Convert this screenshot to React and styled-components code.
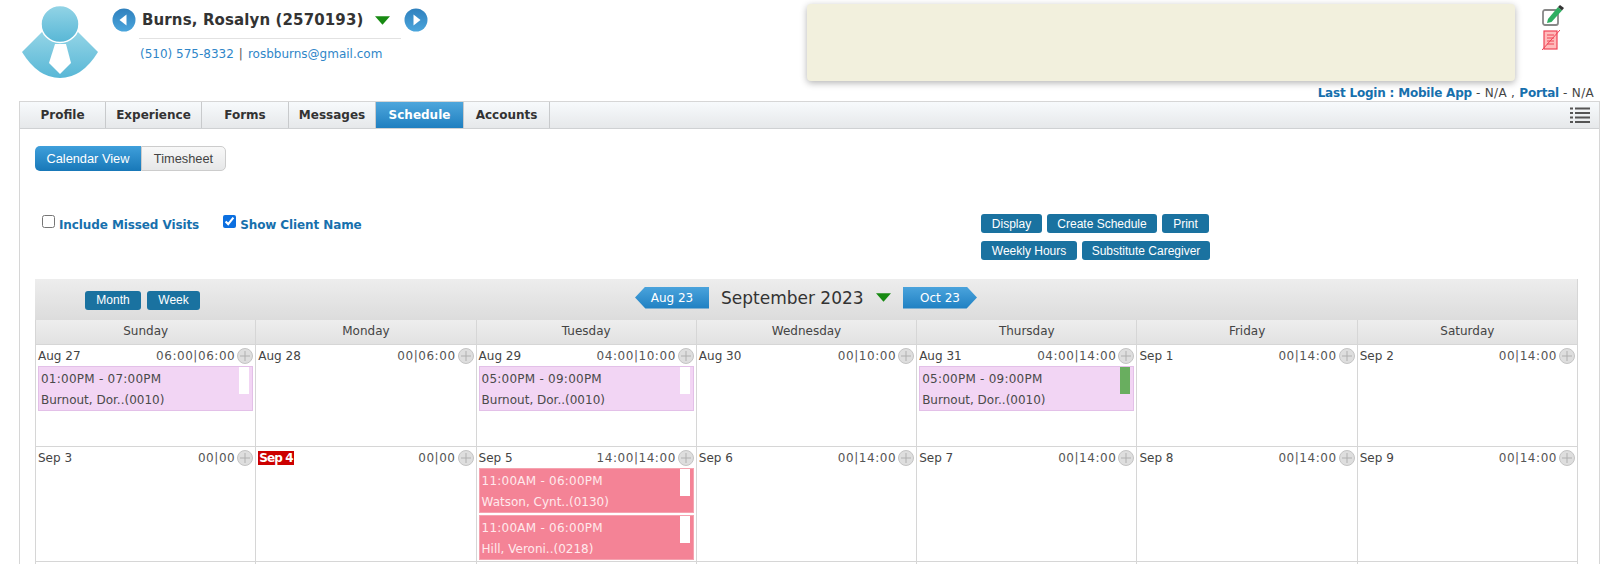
import React from 'react';
import styled, { createGlobalStyle } from 'styled-components';

const GlobalStyle = createGlobalStyle`
  html, body {
    margin: 0;
    padding: 0;
    height: 564px;
    overflow: hidden;
    background: #fff;
    font-family: "DejaVu Sans", Verdana, sans-serif;
    font-size: 12px;
    color: #444;
  }
`;

const Page = styled.div`
  width: 1600px;
  height: 564px;
  overflow: hidden;
`;

const Top = styled.header`
  display: flex;
  height: 85px;
  padding-left: 22px;
`;

const Identity = styled.div`
  width: 318px;
  margin-left: 12px;
  padding-top: 8px;
`;

const NameRow = styled.div`
  display: flex;
  align-items: center;
  height: 24px;
`;

const Name = styled.div`
  display: flex;
  align-items: center;
  width: 260px;
  margin: 0 2px 0 6px;
  font-size: 15px;
  letter-spacing: 0.12px;
  font-weight: bold;
  color: #333;
  white-space: nowrap;
`;

const NameRule = styled.div`
  width: 262px;
  height: 1px;
  margin: 6px 0 0 27px;
  background: #e2e2e2;
`;

const Contact = styled.div`
  margin: 8px 0 0 28px;
  color: #2f86c8;
`;

const Separator = styled.span`
  margin: 0 5px;
  color: #555;
`;

const NoteBox = styled.div`
  width: 708px;
  height: 77px;
  margin: 4px 0 0 auto;
  background: #f2f0dd;
  border-radius: 4px;
  box-shadow: 0 2px 7px rgba(0, 0, 0, 0.3);
`;

const ActionIcons = styled.div`
  display: flex;
  flex-direction: column;
  gap: 4px;
  width: 38px;
  margin: 4px 20px 0 27px;
`;

const LastLogin = styled.div`
  height: 16px;
  padding-right: 6px;
  line-height: 16px;
  text-align: right;
  white-space: nowrap;
  letter-spacing: 0.3px;
  color: #444;
`;

const LoginLabel = styled.b`
  letter-spacing: -0.2px;
  color: #1770ad;
`;

const Panel = styled.main`
  margin-left: 19px;
  border: 1px solid #d6d6d6;
  border-bottom: 0;
  height: 464px;
`;

const TabBar = styled.nav`
  display: flex;
  height: 26px;
  background: linear-gradient(#f7fafc, #e6e8ea);
  border-bottom: 1px solid #cfd1d3;
  position: relative;
`;

const Tab = styled.div`
  display: flex;
  align-items: center;
  justify-content: center;
  box-sizing: border-box;
  width: ${(p) => p.$w}px;
  border-right: 1px solid #c8cacc;
  font-weight: bold;
  color: ${(p) => (p.$active ? '#fff' : '#333')};
  background: ${(p) => (p.$active ? 'linear-gradient(#4ea6dc, #1f7fc0)' : 'none')};
`;

const MenuButton = styled.div`
  position: absolute;
  right: 9px;
  top: 5px;
  line-height: 0;
`;

const Content = styled.div`
  padding: 17px 17px 0 15px;
`;

const ViewSwitch = styled.div`
  display: flex;
  width: 191px;
  height: 25px;
`;

const ViewTab = styled.div`
  display: flex;
  align-items: center;
  justify-content: center;
  flex: ${(p) => p.$w} 0 0;
  box-sizing: border-box;
  font-family: "Liberation Sans", Arial, sans-serif;
  font-size: 12.8px;
  color: ${(p) => (p.$active ? '#fff' : '#444')};
  background: ${(p) => (p.$active ? 'linear-gradient(#3f9fdb, #1878b8)' : 'linear-gradient(#f8f8f8, #e6e7e8)')};
  border: ${(p) => (p.$active ? '0' : '1px solid #ccc')};
  border-radius: ${(p) => (p.$active ? '5px 0 0 5px' : '0 5px 5px 0')};
`;

const Options = styled.section`
  display: flex;
  justify-content: space-between;
  height: 65px;
  margin-top: 43px;
  padding-right: 371px;
`;

const Checks = styled.div`
  display: flex;
  gap: 24px;
  padding: 1px 0 0 7px;
`;

const CheckLabel = styled.label`
  display: flex;
  height: 20px;
  font-weight: bold;
  letter-spacing: -0.1px;
  color: #1770ad;
  line-height: 20px;
`;

const CheckBox = styled.input`
  width: 13px;
  height: 13px;
  margin: 0 4px 0 0;
  accent-color: #0b6fe0;
`;

const Actions = styled.div`
  display: flex;
  flex-direction: column;
  gap: 8px;
  width: 230px;
`;

const ActionRow = styled.div`
  display: flex;
  gap: 5px;
`;

const Button = styled.div`
  display: flex;
  align-items: center;
  justify-content: center;
  width: ${(p) => p.$w}px;
  height: 19px;
  border-radius: 3px;
  background: #1a72a0;
  color: #fff;
  font-family: "Liberation Sans", Arial, sans-serif;
  font-size: 12px;
`;

const Calendar = styled.section`
  width: 1542px;
  border-right: 1px solid #d6d6d6;
`;

const CalToolbar = styled.div`
  display: flex;
  align-items: center;
  height: 41px;
  background: linear-gradient(#ededed, #dcdcdc);
`;

const ViewButtons = styled.div`
  display: flex;
  gap: 6px;
  width: 600px;
  padding: 1px 0 0 50px;
  box-sizing: border-box;
`;

const MonthTag = styled.div`
  display: flex;
  align-items: center;
  justify-content: center;
  width: 74px;
  height: 22px;
  margin-top: -4px;
  color: #fff;
  background: linear-gradient(#4aa3dc, #1f80c2);
  clip-path: ${(p) => (p.$next
    ? 'polygon(0 0, 86% 0, 100% 50%, 86% 100%, 0 100%)'
    : 'polygon(14% 0, 100% 0, 100% 100%, 14% 100%, 0 50%)')};
`;

const MonthTitle = styled.div`
  display: flex;
  align-items: center;
  width: 194px;
  padding-left: 12px;
  box-sizing: border-box;
  font-size: 17px;
  margin-top: -4px;
  color: #333;
  white-space: nowrap;
`;

const Grid = styled.div`
  display: grid;
  grid-template-columns: repeat(7, 1fr);
`;

const DayName = styled.div`
  height: 25px;
  line-height: 23px;
  box-sizing: border-box;
  text-align: center;
  color: #444;
  background: linear-gradient(#eeeeee, #e2e2e2);
  border-left: 1px solid #d6d6d6;
  border-bottom: 1px solid #d6d6d6;
`;

const Cell = styled.div`
  box-sizing: border-box;
  height: ${(p) => p.$h}px;
  padding: 2px 2px 0 2px;
  border-left: 1px solid #d6d6d6;
  border-bottom: 1px solid #d6d6d6;
`;

const CellHead = styled.div`
  display: flex;
  align-items: center;
  height: 17px;
  margin-bottom: 2px;
`;

const DateText = styled.span`
  padding: 0 ${(p) => (p.$today ? '1px' : '0')};
  margin-right: auto;
  color: ${(p) => (p.$today ? '#fff' : '#444')};
  background: ${(p) => (p.$today ? '#cc0000' : 'none')};
  font-weight: ${(p) => (p.$today ? 'bold' : 'normal')};
  letter-spacing: ${(p) => (p.$today ? '-0.9px' : '0')};
`;

const Totals = styled.span`
  margin-right: 2px;
  letter-spacing: 0.55px;
  color: #555;
`;

const Visit = styled.div`
  position: relative;
  box-sizing: border-box;
  height: 45px;
  margin: 0 0 2px 0;
  padding: 2px 2px 0;
  line-height: 21px;
  white-space: nowrap;
  color: ${(p) => (p.$missed ? '#ffe9ec' : '#4a4a4a')};
  background: ${(p) => (p.$missed ? '#f48396' : '#f2d5f4')};
  border: 1px solid ${(p) => (p.$missed ? '#f5a3b0' : '#e3c0e8')};
`;

const VisitTime = styled.div`
  letter-spacing: 0.24px;
`;

const VisitFlag = styled.span`
  position: absolute;
  top: 0;
  right: 3px;
  width: 10px;
  height: 27px;
  background: ${(p) => (p.$done ? '#69ae5f' : '#fff')};
`;

const Triangle = ({ size = 15 }) => (
  <svg width={size} height={size * 0.6} viewBox="0 0 14 8" style={{ flex: 'none' }}>
    <path d="M0 0h14L7 8z" fill="#178a12" />
  </svg>
);

const CircleArrow = ({ flip }) => (
  <svg width="24" height="24" viewBox="0 0 24 24" style={{ flex: 'none' }}>
    <defs>
      <linearGradient id="circleArrow" x1="0" y1="0" x2="0" y2="1">
        <stop offset="0" stopColor="#2f80bd" />
        <stop offset="1" stopColor="#4aa5dc" />
      </linearGradient>
    </defs>
    <circle cx="12" cy="12" r="11.5" fill="url(#circleArrow)" />
    <path d={flip ? 'M9.5 6.5v11l7-5.5z' : 'M14.5 6.5v11l-7-5.5z'} fill="#fff" />
  </svg>
);

const Avatar = () => (
  <svg width="78" height="76" viewBox="0 0 78 76" style={{ flex: 'none', marginTop: 4 }}>
    <defs>
      <linearGradient id="avatarFill" x1="0" y1="0" x2="0" y2="1">
        <stop offset="0" stopColor="#93d4e6" />
        <stop offset="1" stopColor="#58b7d6" />
      </linearGradient>
    </defs>
    <path
      d="M0 48L20 28h36L76 48Q60 74 38 74T0 48z"
      fill="url(#avatarFill)"
    />
    <ellipse cx="38" cy="20" rx="19" ry="18.5" fill="url(#avatarFill)" stroke="#fff" strokeWidth="1.5" />
    <path d="M33 40h11l5 19-11 11-11-11z" fill="#fff" />
  </svg>
);

const EditIcon = () => (
  <svg width="22" height="22" viewBox="0 0 22 22">
    <rect x="1" y="6" width="15" height="15" rx="2" fill="#fff" stroke="#888" strokeWidth="1.8" />
    <path d="M6 15L16 3l4 3.5L9.5 18l-4.5 1z" fill="#2fae62" />
    <path d="M16 3l2-2 4 3-2 2.5z" fill="#333" />
  </svg>
);

const NoFormIcon = () => (
  <svg width="18" height="20" viewBox="0 0 18 20">
    <rect x="2" y="1" width="13" height="18" fill="#fbb" stroke="#ee4455" strokeWidth="1.2" />
    <path d="M5 5h7M5 8h7M5 11h7M5 14h7" stroke="#ee4455" />
    <path d="M0 20L18 0" stroke="#ee4455" />
  </svg>
);

const ListIcon = () => (
  <svg width="20" height="17" viewBox="0 0 20 17">
    <path d="M0 1.5h3M5 1.5h15M0 6h3M5 6h15M0 10.5h3M5 10.5h15M0 15h3M5 15h15" stroke="#555" strokeWidth="2" />
  </svg>
);

const PlusIcon = () => (
  <svg width="16" height="16" viewBox="0 0 16 16" style={{ flex: 'none' }}>
    <circle cx="8" cy="8" r="7.5" fill="#dedede" stroke="#c4c4c4" />
    <path d="M8 3v10M3 8h10" stroke="#b0b0b0" />
  </svg>
);

const tabs = [
  ['Profile', 86], ['Experience', 96], ['Forms', 87], ['Messages', 87], ['Schedule', 88], ['Accounts', 86],
];
const dayNames = ['Sunday', 'Monday', 'Tuesday', 'Wednesday', 'Thursday', 'Friday', 'Saturday'];

const burnout = (time, done) => ({ time, name: 'Burnout, Dor..(0010)', done });
const week1 = [
  { date: 'Aug 27', totals: '06:00|06:00', visits: [burnout('01:00PM - 07:00PM')] },
  { date: 'Aug 28', totals: '00|06:00' },
  { date: 'Aug 29', totals: '04:00|10:00', visits: [burnout('05:00PM - 09:00PM')] },
  { date: 'Aug 30', totals: '00|10:00' },
  { date: 'Aug 31', totals: '04:00|14:00', visits: [burnout('05:00PM - 09:00PM', true)] },
  { date: 'Sep 1', totals: '00|14:00' },
  { date: 'Sep 2', totals: '00|14:00' },
];
const week2 = [
  { date: 'Sep 3', totals: '00|00' },
  { date: 'Sep 4', totals: '00|00', today: true },
  {
    date: 'Sep 5',
    totals: '14:00|14:00',
    visits: [
      { time: '11:00AM - 06:00PM', name: 'Watson, Cynt..(0130)', missed: true },
      { time: '11:00AM - 06:00PM', name: 'Hill, Veroni..(0218)', missed: true },
    ],
  },
  { date: 'Sep 6', totals: '00|14:00' },
  { date: 'Sep 7', totals: '00|14:00' },
  { date: 'Sep 8', totals: '00|14:00' },
  { date: 'Sep 9', totals: '00|14:00' },
];

function DayCell({ day, height }) {
  return (
    <Cell $h={height}>
      <CellHead>
        <DateText $today={day.today}>{day.date}</DateText>
        <Totals>{day.totals}</Totals>
        <PlusIcon />
      </CellHead>
      {(day.visits || []).map((v) => (
        <Visit key={v.name} $missed={v.missed}>
          <VisitTime>{v.time}</VisitTime>
          {v.name}
          <VisitFlag $done={v.done} />
        </Visit>
      ))}
    </Cell>
  );
}

export default function App() {
  return (
    <Page>
      <GlobalStyle />
      <Top>
        <Avatar />
        <Identity>
          <NameRow>
            <CircleArrow />
            <Name>
              Burns, Rosalyn (2570193)
              <span style={{ width: 12 }} />
              <Triangle />
            </Name>
            <CircleArrow flip />
          </NameRow>
          <NameRule />
          <Contact>
            (510) 575-8332<Separator>|</Separator>rosbburns@gmail.com
          </Contact>
        </Identity>
        <NoteBox />
        <ActionIcons>
          <EditIcon />
          <NoFormIcon />
        </ActionIcons>
      </Top>
      <LastLogin>
        <LoginLabel>Last Login : Mobile App</LoginLabel> - N/A , <LoginLabel>Portal</LoginLabel> - N/A
      </LastLogin>
      <Panel>
        <TabBar>
          {tabs.map(([label, w]) => (
            <Tab key={label} $w={w} $active={label === 'Schedule'}>{label}</Tab>
          ))}
          <MenuButton><ListIcon /></MenuButton>
        </TabBar>
        <Content>
          <ViewSwitch>
            <ViewTab $w={107} $active>Calendar View</ViewTab>
            <ViewTab $w={84}>Timesheet</ViewTab>
          </ViewSwitch>
          <Options>
            <Checks>
              <CheckLabel><CheckBox type="checkbox" readOnly />Include Missed Visits</CheckLabel>
              <CheckLabel><CheckBox type="checkbox" checked readOnly />Show Client Name</CheckLabel>
            </Checks>
            <Actions>
              <ActionRow>
                <Button $w={61}>Display</Button>
                <Button $w={110}>Create Schedule</Button>
                <Button $w={47}>Print</Button>
              </ActionRow>
              <ActionRow>
                <Button $w={96}>Weekly Hours</Button>
                <Button $w={128}>Substitute Caregiver</Button>
              </ActionRow>
            </Actions>
          </Options>
          <Calendar>
            <CalToolbar>
              <ViewButtons>
                <Button $w={56}>Month</Button>
                <Button $w={53}>Week</Button>
              </ViewButtons>
              <MonthTag>Aug 23</MonthTag>
              <MonthTitle>
                September 2023
                <span style={{ width: 12 }} />
                <Triangle />
              </MonthTitle>
              <MonthTag $next>Oct 23</MonthTag>
            </CalToolbar>
            <Grid>
              {dayNames.map((d) => <DayName key={d}>{d}</DayName>)}
              {week1.map((d) => <DayCell key={d.date} day={d} height={102} />)}
              {week2.map((d) => <DayCell key={d.date} day={d} height={115} />)}
              {dayNames.map((d) => <Cell key={d} $h={40} />)}
            </Grid>
          </Calendar>
        </Content>
      </Panel>
    </Page>
  );
}
